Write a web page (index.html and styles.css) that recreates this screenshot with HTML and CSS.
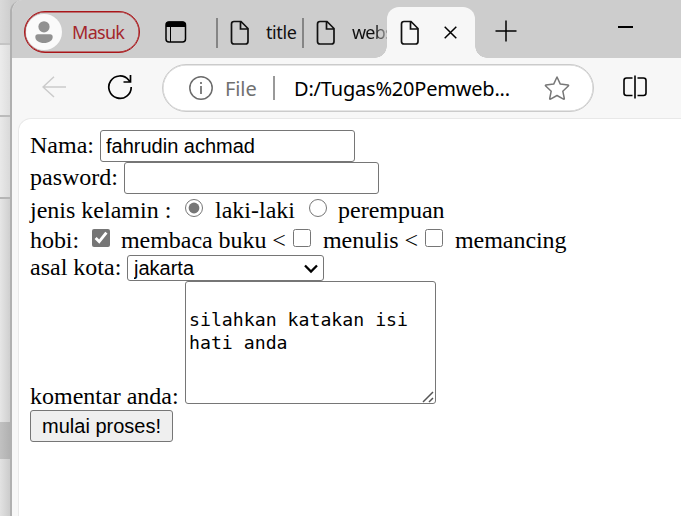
FILE: index.html
```html
<!DOCTYPE html>
<html lang="id">
<head>
<meta charset="utf-8">
<title>Form</title>
<link rel="stylesheet" href="styles.css">
</head>
<body>
<aside class="behind"><i class="b1"></i><i class="b2"></i><i class="b3"></i><i class="b4"></i><i class="b5"></i></aside>
<div class="window">
  <header class="tabs">
    <div class="profile">
      <svg class="avatar" width="36" height="36" viewBox="0 0 36 36"><circle cx="18" cy="18" r="18" fill="#fafafa"/><circle cx="18" cy="12.8" r="5.6" fill="#919191"/><path d="M12 20.3h12q2.7 0 2.7 2.7c0 3.6-3.8 6-8.7 6s-8.7-2.400-8.700-6q0-2.700 2.700-2.700z" fill="#919191"/></svg>
      <span class="masuk">Masuk</span>
    </div>
    <svg class="workspace" width="22" height="22" viewBox="0 0 22 22"><rect x="1" y="1" width="19.500" height="20" rx="3" fill="none" stroke="#000" stroke-width="1.500"/><path d="M1 6V3.500Q1 .5 4 .5h13.500q3 0 3 3V6z"/><path d="M5.500 6v15" stroke="#000" stroke-width="1"/></svg>
    <div class="tab tab-one"><svg class="file" width="20" height="26" viewBox="0 0 20 26"><path d="M4 1.500h7l7 7v13q0 2.500-2.500 2.500H4q-2.500 0-2.500-2.500V4Q1.500 1.500 4 1.500zM10.500 1.500V9H18"/></svg><span>title</span></div>
    <div class="tab tab-two"><svg class="file" width="20" height="26" viewBox="0 0 20 26"><path d="M4 1.500h7l7 7v13q0 2.500-2.500 2.500H4q-2.500 0-2.500-2.500V4Q1.500 1.500 4 1.500zM10.500 1.500V9H18"/></svg><span class="fade">webs</span></div>
    <div class="active"><svg class="file" width="20" height="26" viewBox="0 0 20 26"><path d="M4 1.500h7l7 7v13q0 2.500-2.500 2.500H4q-2.500 0-2.500-2.500V4Q1.500 1.500 4 1.500zM10.500 1.500V9H18"/></svg><svg class="close" width="13" height="13" viewBox="0 0 13 13"><path d="M.7.7l11.600 11.600M12.300.7L.7 12.300" stroke="#000" stroke-width="1.500"/></svg></div>
    <svg class="plus" width="22" height="22" viewBox="0 0 22 22"><path d="M.500 11h21M11 .500v21" stroke="#000" stroke-width="1.500"/></svg>
    <i class="minimize"></i>
  </header>
  <nav class="toolbar">
    <svg class="back" width="24" height="22" viewBox="0 0 24 22"><path d="M24 11H1M12 .7L1 11l11 10" fill="none" stroke="#cbcbcb" stroke-width="1.500"/></svg>
    <svg class="reload" width="26" height="26" viewBox="0 0 26 26"><path d="M24.200 13A11.200 11.200 0 1 1 21.600 6l1.600 1.800M16.500 8h7V1" fill="none" stroke="#000" stroke-width="1.700"/></svg>
    <div class="address">
      <svg class="info" width="24" height="24" viewBox="0 0 24 24"><circle cx="12" cy="12" r="11.200" fill="none" stroke="#6c6c6c" stroke-width="1.500"/><path d="M12 10v8M12 6v2" stroke="#6c6c6c" stroke-width="1.700"/></svg>
      <span class="scheme">File</span>
      <i class="divider"></i>
      <span class="url">D:/Tugas%20Pemweb...</span>
      <svg class="star" width="26" height="26" viewBox="0 0 26 26"><path d="M13 2l3.300 7.100 7.800.9q.9.300.2 1l-5.500 5.200 1.500 7.300q0 .9-.8.600L13 20.500l-6.500 3.600q-.8.300-.8-.6l1.500-7.300L1.700 11q-.7-.7.2-1l7.800-.9z" fill="none" stroke="#777" stroke-width="1.500" stroke-linejoin="round"/></svg>
    </div>
    <svg class="split" width="24" height="24" viewBox="0 0 24 24"><path d="M9.500 3H3.500Q1 3 1 5.500v12.500q0 2.500 2.500 2.500h6M14.500 3h6Q23 3 23 5.500v12.500q0 2.500-2.500 2.500h-6M12 .5v23" fill="none" stroke="#000" stroke-width="1.600"/></svg>
  </nav>
  <main class="page">
    <form>
      <div class="row name"><label>Nama:</label><input type="text" value="fahrudin achmad"></div>
      <div class="row password"><label>pasword:</label><input type="password"></div>
      <div class="row gender"><label>jenis kelamin :</label><input type="radio" name="g" checked><span>laki-laki</span><input type="radio" name="g"><span>perempuan</span></div>
      <div class="row hobby"><label>hobi:</label><input type="checkbox" checked><span>membaca buku &lt;</span><input type="checkbox"><span>menulis &lt;</span><input type="checkbox"><span>memancing</span></div>
      <div class="row city"><label>asal kota:</label><div class="select-wrap"><select><option>jakarta</option></select><svg class="chevron" width="14" height="10" viewBox="0 0 14 10"><path d="M1 1.500l6 6 6-6" fill="none" stroke="#000" stroke-width="2.300"/></svg></div></div>
      <div class="row comment"><label>komentar anda:</label><div class="area-wrap"><textarea>

silahkan katakan isi
hati anda</textarea><svg class="grip" width="12" height="12" viewBox="0 0 12 12"><path d="M1 11L11 1M7 11l4-4" stroke="#555" stroke-width="1.500"/></svg></div></div>
      <button type="button">mulai proses!</button>
    </form>
  </main>
</div>
</body>
</html>
```
FILE: styles.css
```css
* { box-sizing: border-box; }
html, body { height: 100%; }
body { margin: 0; display: flex; overflow: hidden; background: #ccc; }
svg, i { display: block; flex: none; }

.behind { width: 10px; flex: none; display: flex; flex-direction: column; background: linear-gradient(90deg, #e2e2e2, #ccc); }
.b1 { height: 43px; background: linear-gradient(90deg, #dadada, #cfcfcf); }
.b2 { height: 74px; background: linear-gradient(90deg, #ececec, #dedede); border-top: 2px solid #c4c4c4; border-bottom: 2px solid #bbb; }
.b3 { height: 82px; background: linear-gradient(90deg, #e9e9e9, #d9d9d9); border-bottom: 2px solid #b5b5b5; }
.b4 { height: 223px; background: linear-gradient(90deg, #e6e6e6, #cfcfcf); }
.b5 { height: 37px; background: linear-gradient(90deg, #c1c1c1, #b1b1b1); }

.window { flex: 1; min-width: 0; border-left: 2px solid #b0b0b0; border-top-left-radius: 12px; background: #f7f7f7; overflow: hidden; display: flex; flex-direction: column; }
.tabs { height: 58px; flex: none; display: flex; align-items: flex-start; background: #cdcdcd; font: 18px "Noto Sans", sans-serif; color: #111; }
.profile { width: 116px; height: 42px; margin: 11px 0 0 12px; border: 1px solid #a91519; box-shadow: inset 0 0 0 .5px #a91519; border-radius: 21px; display: flex; align-items: center; padding-left: 1px; flex: none; }
.masuk { color: #a4262c; margin-left: 10px; font-size: 18px; line-height: 36px; letter-spacing: -.7px; }
.workspace { margin: 21px 0 0 25px; }
.tab { height: 30px; margin-top: 18px; border-left: 2px solid #858585; display: flex; flex: none; line-height: 29px; }
.tab-one { width: 86px; margin-left: 29px; }
.tab-two { width: 85px; }
.file { margin: 2px 0 0 12px; fill: none; stroke: #111; stroke-width: 1.7; flex: none; }
.tab span { margin-left: 16px; letter-spacing: -.4px; }
.tab-two .file { margin-left: 12px; }
.tab .fade { flex: none; background: linear-gradient(90deg, #111 55%, #cdcdcd 95%); background-clip: text; color: transparent; letter-spacing: -.8px; }
.active { position: relative; width: 88px; height: 51px; margin-top: 7px; background: #f7f7f7; border-radius: 12px 12px 0 0; display: flex; flex: none; }
.active::before, .active::after { content: ""; position: absolute; bottom: 0; width: 12px; height: 12px; }
.active::before { right: 100%; background: radial-gradient(circle at 0 0, transparent 11.5px, #f7f7f7 12px); }
.active::after { left: 100%; background: radial-gradient(circle at 100% 0, transparent 11.5px, #f7f7f7 12px); }
.active .file { margin: 13px 0 0 13px; }
.close { margin: 19px 0 0 24px; }
.plus { margin: 20px 0 0 20px; }
.minimize { width: 15px; height: 2px; margin: 26px 0 0 101px; background: #000; }

.toolbar { height: 60px; flex: none; display: flex; align-items: flex-start; font: 20px "Noto Sans", sans-serif; }
.back { margin: 18px 0 0 30px; }
.reload { margin: 16px 0 0 41px; }
.address { width: 432px; height: 48px; margin: 6px 0 0 29px; border: 1px solid #cbcbcb; box-shadow: inset 0 0 0 .5px #cbcbcb; border-radius: 24px; background: #fff; display: flex; align-items: center; flex: none; line-height: 44px; white-space: nowrap; }
.info { margin-left: 26px; }
.scheme { margin: 2px 0 0 12px; width: 48px; color: #707070; letter-spacing: -.1px; }
.divider { width: 2px; height: 24px; background: #999; }
.url { margin: 2px 0 0 19px; width: 248px; color: #000; letter-spacing: -.2px; }
.star { margin-left: 2px; }
.split { margin: 17px 0 0 29px; }

.page { flex: 1; margin-left: 6px; background: #fff; border-left: 1px solid #e8e8e8; border-top: 1px solid #e8e8e8; border-top-left-radius: 13px; padding: 11px 0 0 11px; font: 24px/27px "Liberation Serif", serif; color: #000; white-space: nowrap; }
.row { display: grid; align-items: start; }
.row input, select, textarea, button { margin: 0; }
.name, .password { height: 32px; }
.name { grid-template-columns: 70px 255px; }
.password { grid-template-columns: 94px 255px; }
.name label, .password label { margin-top: 2px; }
.row input[type=text], .row input[type=password] { width: 255px; height: 32px; border: 1px solid #767676; border-radius: 3px; padding: 0 5px; font: 20px "Liberation Sans", sans-serif; color: #000; background: #fff; }
.gender { height: 30px; grid-template-columns: 155px 30px 93px 30px auto; }
.gender label, .gender span { margin-top: 3px; }
.gender input { margin-top: 5px; }
.gender input + span + input { margin-left: 1px; }
.hobby { height: 30px; grid-template-columns: 62px 29px 172px 30px 102px 30px auto; letter-spacing: -.05px; }
.hobby label, .hobby span { margin-top: 3px; }
.hobby input { margin-top: 5px; }
input[type=radio], input[type=checkbox] { width: 18px; height: 18px; accent-color: #767676; }
.city { height: 27px; grid-template-columns: 97px 197px; }
.select-wrap, .area-wrap { position: relative; }
select { display: block; width: 197px; height: 26px; margin-top: 1px; appearance: none; border: 1px solid #767676; border-radius: 3px; background: #fff; padding: 0 6px; font: 20px "Liberation Sans", sans-serif; color: #000; }
.chevron { position: absolute; right: 6px; top: 10px; }
.comment { height: 129px; grid-template-columns: 155px 251px; }
.comment label { margin-top: 102px; }
textarea { display: block; width: 251px; height: 123px; resize: none; overflow: hidden; border: 1px solid #767676; border-radius: 3px; padding: 3px; font: 18.2px/23px "DejaVu Sans Mono", monospace; color: #000; }
.grip { position: absolute; right: 2px; bottom: 1px; }
.area-wrap { height: 123px; }
button { display: block; width: 143px; height: 32px; border: 1px solid #767676; border-radius: 3px; background: #efefef; padding: 0; font: 20px "Liberation Sans", sans-serif; color: #000; }
```
